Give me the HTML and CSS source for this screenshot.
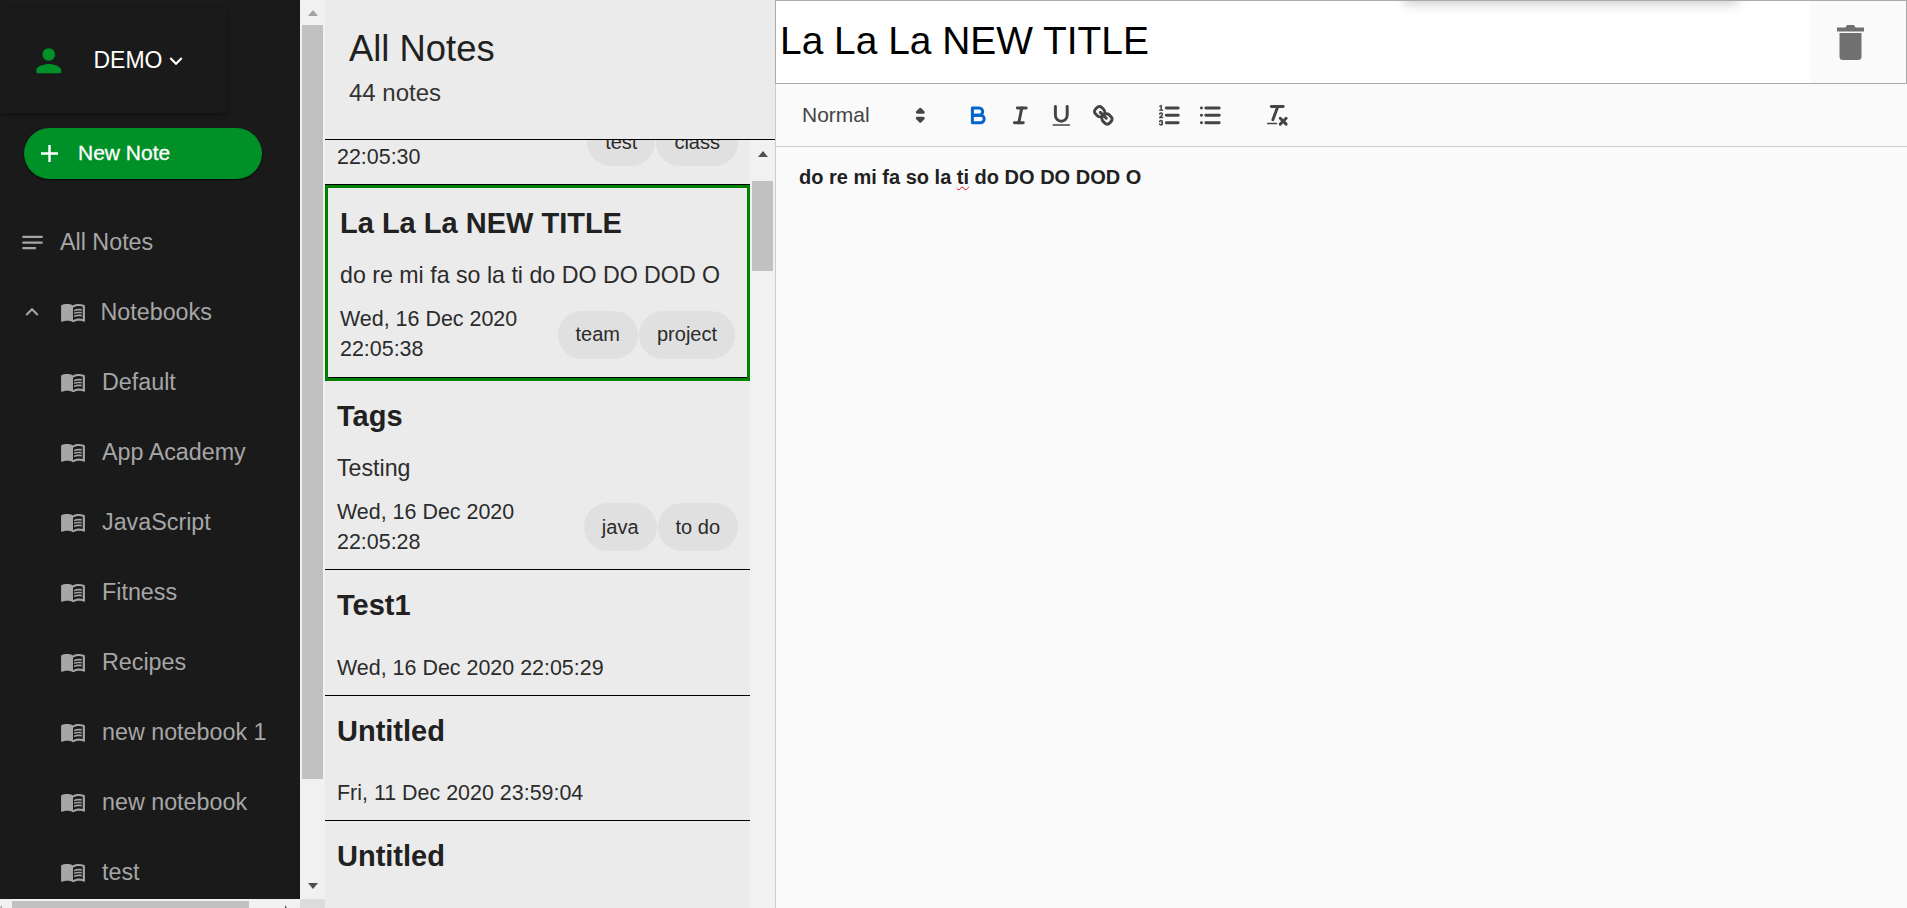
FILE: index.html
```html
<!DOCTYPE html>
<html lang="en">
<head>
  <meta charset="UTF-8">
  <title>Notes</title>
  <link rel="stylesheet" href="styles.css">
</head>
<body>
  <div class="app">

    <aside class="sidebar">
      <div class="sidebar-main">
        <div class="sidebar-content">
          <div class="profile">
            <svg class="person-icon" viewBox="0 0 24 24"><path d="M12 12c2.21 0 4-1.79 4-4s-1.79-4-4-4-4 1.79-4 4 1.79 4 4 4zm0 2c-2.67 0-8 1.34-8 4v1c0 .55.45 1 1 1h14c.55 0 1-.45 1-1v-1c0-2.66-5.33-4-8-4z"/></svg>
            <span class="profile-name">DEMO</span>
            <svg class="chevron" viewBox="0 0 24 24"><path d="M16.59 8.59L12 13.17 7.41 8.59 6 10l6 6 6-6z"/></svg>
          </div>

          <button class="new-note">
            <svg class="plus-icon" viewBox="0 0 24 24"><path d="M19 13h-6v6h-2v-6H5v-2h6V5h2v6h6v2z"/></svg>
            <span class="new-note-label">New Note</span>
          </button>

          <nav class="nav">
            <div class="nav-row nav-all">
              <svg class="notes-icon" viewBox="0 0 24 24"><path d="M3 18h12v-2H3v2zM3 6v2h18V6H3zm0 7h18v-2H3v2z"/></svg>
              All Notes
            </div>
            <div class="nav-row nav-group">
              <svg class="nav-icon" viewBox="0 0 24 24"><path d="M12 8l-6 6 1.41 1.41L12 10.83l4.59 4.58L18 14z"/></svg>
              <svg class="nav-icon" viewBox="0 0 24 24"><use href="#book"/></svg>
              Notebooks
            </div>
            <div class="nav-row nav-child"><svg class="nav-icon" viewBox="0 0 24 24"><use href="#book"/></svg>Default</div>
            <div class="nav-row nav-child"><svg class="nav-icon" viewBox="0 0 24 24"><use href="#book"/></svg>App Academy</div>
            <div class="nav-row nav-child"><svg class="nav-icon" viewBox="0 0 24 24"><use href="#book"/></svg>JavaScript</div>
            <div class="nav-row nav-child"><svg class="nav-icon" viewBox="0 0 24 24"><use href="#book"/></svg>Fitness</div>
            <div class="nav-row nav-child"><svg class="nav-icon" viewBox="0 0 24 24"><use href="#book"/></svg>Recipes</div>
            <div class="nav-row nav-child"><svg class="nav-icon" viewBox="0 0 24 24"><use href="#book"/></svg>new notebook 1</div>
            <div class="nav-row nav-child"><svg class="nav-icon" viewBox="0 0 24 24"><use href="#book"/></svg>new notebook</div>
            <div class="nav-row nav-child"><svg class="nav-icon" viewBox="0 0 24 24"><use href="#book"/></svg>test</div>
          </nav>
        </div>

        <div class="vbar vbar-sidebar">
          <span class="arrow-up arrow-faded"></span>
          <span class="vbar-thumb"></span>
          <span class="arrow-down"></span>
        </div>
      </div>

      <div class="sidebar-bottom">
        <div class="hbar">
          <span class="hbar-left"></span>
          <span class="hbar-thumb"></span>
          <span class="hbar-right"></span>
        </div>
        <div class="bar-corner"></div>
      </div>
    </aside>

    <section class="notes">
      <header class="notes-header">
        <h1>All Notes</h1>
        <p>44 notes</p>
      </header>

      <div class="notes-scroll">
        <div class="note-list">
          <!-- list is scrolled, only the foot of this note shows -->
          <article class="note note-scrolled">
            <div class="note-footer">
              <span class="note-date">Wed, 16 Dec 2020 22:05:30</span>
              <div class="chips"><span class="chip">test</span><span class="chip">class</span></div>
            </div>
          </article>

          <article class="note note-selected">
            <h2>La La La NEW TITLE</h2>
            <p class="note-body">do re mi fa so la ti do DO DO DOD O</p>
            <div class="note-footer">
              <span class="note-date">Wed, 16 Dec 2020 22:05:38</span>
              <div class="chips"><span class="chip">team</span><span class="chip">project</span></div>
            </div>
          </article>

          <article class="note">
            <h2>Tags</h2>
            <p class="note-body">Testing</p>
            <div class="note-footer">
              <span class="note-date">Wed, 16 Dec 2020 22:05:28</span>
              <div class="chips"><span class="chip">java</span><span class="chip">to do</span></div>
            </div>
          </article>

          <article class="note">
            <h2>Test1</h2>
            <div class="note-empty"></div>
            <div class="note-footer">
              <span class="note-date note-date-wide">Wed, 16 Dec 2020 22:05:29</span>
            </div>
          </article>

          <article class="note">
            <h2>Untitled</h2>
            <div class="note-empty"></div>
            <div class="note-footer">
              <span class="note-date note-date-wide">Fri, 11 Dec 2020 23:59:04</span>
            </div>
          </article>

          <article class="note">
            <h2>Untitled</h2>
          </article>
        </div>

        <div class="vbar vbar-list">
          <span class="arrow-up"></span>
          <span class="vbar-thumb"></span>
        </div>
      </div>
    </section>

    <main class="editor">
      <div class="editor-title">
        <div class="title-text">La La La NEW TITLE</div>
        <div class="delete-btn">
          <svg class="trash-icon" viewBox="0 0 27 35"><path d="M10 0h7l1.5 2.5H27V6.500H0V2.500h8.500z"/><path d="M2.500 8h22v23.500a3.500 3.500 0 0 1-3.500 3.500H6a3.500 3.500 0 0 1-3.500-3.500z"/></svg>
        </div>
        <div class="menu-shadow"></div>
      </div>

      <div class="toolbar">
        <div class="picker">
          <span>Normal</span>
          <svg class="ql" viewBox="0 0 18 18"><polygon class="ql-stroke ql-fill" points="7 11 9 13 11 11 7 11"/><polygon class="ql-stroke ql-fill" points="7 7 9 5 11 7 7 7"/></svg>
        </div>

        <div class="tool-group">
          <span class="tool tool-active"><svg class="ql" viewBox="0 0 18 18"><path class="ql-stroke" d="M5,4H9.5A2.5,2.5,0,0,1,12,6.5v0A2.5,2.5,0,0,1,9.5,9H5A0,0,0,0,1,5,9V4A0,0,0,0,1,5,4Z"/><path class="ql-stroke" d="M5,9h5.5A2.5,2.5,0,0,1,13,11.5v0A2.5,2.5,0,0,1,10.5,14H5a0,0,0,0,1,0,0V9A0,0,0,0,1,5,9Z"/></svg></span>
          <span class="tool"><svg class="ql" viewBox="0 0 18 18"><line class="ql-stroke" x1="7" x2="13" y1="4" y2="4"/><line class="ql-stroke" x1="5" x2="11" y1="14" y2="14"/><line class="ql-stroke" x1="8" x2="10" y1="14" y2="4"/></svg></span>
          <span class="tool"><svg class="ql" viewBox="0 0 18 18"><path class="ql-stroke" d="M5,3V9a4.012,4.012,0,0,0,4,4H9a4.012,4.012,0,0,0,4-4V3"/><rect class="ql-fill" height="1" rx="0.5" ry="0.5" width="12" x="3" y="15"/></svg></span>
          <span class="tool"><svg class="ql" viewBox="0 0 18 18"><line class="ql-stroke" x1="7" x2="11" y1="7" y2="11"/><path class="ql-stroke" d="M8.9,4.577a3.476,3.476,0,0,1,.36,4.679A3.476,3.476,0,0,1,4.577,8.9C3.185,7.5,2.035,6.4,4.217,4.217S7.5,3.185,8.9,4.577Z"/><path class="ql-stroke" d="M13.423,9.1a3.476,3.476,0,0,0-4.679-.36,3.476,3.476,0,0,0,.36,4.679c1.392,1.392,2.5,2.542,4.679.36S14.815,10.5,13.423,9.1Z"/></svg></span>
        </div>

        <div class="tool-group">
          <span class="tool"><svg class="ql" viewBox="0 0 18 18"><line class="ql-stroke" x1="7" x2="15" y1="4" y2="4"/><line class="ql-stroke" x1="7" x2="15" y1="9" y2="9"/><line class="ql-stroke" x1="7" x2="15" y1="14" y2="14"/><line class="ql-stroke ql-thin" x1="2.5" x2="4.5" y1="5.5" y2="5.5"/><path class="ql-fill" d="M3.5,6A0.5,0.5,0,0,1,3,5.5V3.085l-0.276.138A0.5,0.5,0,0,1,2.053,3c-0.124-.247-0.023-0.324.224-0.447l1-.5A0.5,0.5,0,0,1,4,2.5v3A0.5,0.5,0,0,1,3.5,6Z"/><path class="ql-stroke ql-thin" d="M4.5,10.5h-2c0-.234,1.85-1.076,1.85-2.234A0.959,0.959,0,0,0,2.5,8.156"/><path class="ql-stroke ql-thin" d="M2.5,14.846a0.959,0.959,0,0,0,1.85-.109A0.7,0.7,0,0,0,3.75,14a0.688,0.688,0,0,0,.6-0.736,0.959,0.959,0,0,0-1.85-.109"/></svg></span>
          <span class="tool"><svg class="ql" viewBox="0 0 18 18"><line class="ql-stroke" x1="6" x2="15" y1="4" y2="4"/><line class="ql-stroke" x1="6" x2="15" y1="9" y2="9"/><line class="ql-stroke" x1="6" x2="15" y1="14" y2="14"/><line class="ql-stroke" x1="3" x2="3" y1="4" y2="4"/><line class="ql-stroke" x1="3" x2="3" y1="9" y2="9"/><line class="ql-stroke" x1="3" x2="3" y1="14" y2="14"/></svg></span>
        </div>

        <div class="tool-group">
          <span class="tool"><svg class="ql" viewBox="0 0 18 18"><line class="ql-stroke" x1="5" x2="13" y1="3" y2="3"/><line class="ql-stroke" x1="6" x2="9.35" y1="12" y2="3"/><line class="ql-stroke" x1="11" x2="15" y1="11" y2="15"/><line class="ql-stroke" x1="15" x2="11" y1="11" y2="15"/><rect class="ql-fill" height="1" rx="0.5" ry="0.5" width="7" x="2" y="14"/></svg></span>
        </div>
      </div>

      <div class="editor-body">
        <p>do re mi fa so la <span class="misspelled">ti</span> do DO DO DOD O</p>
      </div>
    </main>

  </div>

  <svg class="svg-defs" aria-hidden="true">
    <symbol id="book" viewBox="0 0 24 24">
      <path d="M21 5c-1.11-.35-2.33-.5-3.5-.5-1.95 0-4.05.4-5.5 1.5-1.45-1.1-3.55-1.5-5.5-1.5S2.450 4.900 1 6v14.650c0 .25.25.5.5.5.1 0 .15-.05.25-.05C3.100 20.450 5.050 20 6.500 20c1.950 0 4.050.4 5.500 1.500 1.350-.85 3.800-1.500 5.500-1.500 1.650 0 3.350.3 4.750 1.050.1.05.15.05.25.05.25 0 .5-.25.5-.5V6c-.6-.45-1.250-.75-2-1zm0 13.500c-1.100-.35-2.300-.5-3.500-.5-1.700 0-4.150.65-5.500 1.500V8c1.350-.85 3.800-1.500 5.500-1.500 1.200 0 2.400.15 3.500.5v11.500z"/>
      <path d="M17.500 10.500c.88 0 1.730.09 2.500.26V9.240c-.79-.15-1.640-.24-2.500-.24-1.700 0-3.240.29-4.500.83v1.660c1.130-.64 2.700-.99 4.500-.99zM13 12.490v1.660c1.130-.64 2.700-.99 4.500-.99.88 0 1.730.09 2.500.26V11.900c-.79-.15-1.640-.24-2.500-.24-1.700 0-3.240.3-4.500.83zM17.500 14.330c-1.700 0-3.240.29-4.500.83v1.660c1.130-.64 2.700-.99 4.500-.99.88 0 1.730.09 2.500.26v-1.520c-.79-.16-1.640-.24-2.500-.24z"/>
    </symbol>
  </svg>
</body>
</html>
```

FILE: styles.css
```css
* {
  box-sizing: border-box;
}

body {
  margin: 0;
  font-family: "Liberation Sans", Arial, sans-serif;
  color: #212121;
  background: #fafafa;
}

.app {
  display: flex;
  height: 100vh;
  overflow: hidden;
}

.svg-defs {
  display: none;
}

/* sidebar */

.sidebar {
  display: flex;
  flex-direction: column;
  flex: 0 0 325px;
  height: 908px;
}

.sidebar-main {
  display: flex;
  height: 899px;
}

.sidebar-content {
  flex: 0 0 300px;
  overflow: hidden;
  background: #1a1a1a;
  padding-top: 8px;
}

.profile {
  display: flex;
  align-items: center;
  width: 227px;
  height: 105px;
  padding-left: 30px;
  color: #fff;
  font-size: 23px;
  border-radius: 0 0 6px 0;
  box-shadow: 0 2px 5px rgba(0, 0, 0, 0.35);
}

.person-icon {
  width: 37.500px;
  height: 37.500px;
  fill: #009028;
  margin-right: 26px;
}

.chevron {
  width: 26px;
  height: 26px;
  fill: #fff;
}

.new-note {
  display: flex;
  align-items: center;
  gap: 14px;
  width: 238px;
  height: 51px;
  margin: 15px 0 0 24px;
  padding: 0 0 0 11px;
  border: 0;
  border-radius: 26px;
  background: #009028;
  color: #fff;
  font-family: inherit;
  font-size: 21px;
  -webkit-text-stroke: 0.3px #fff;
  box-shadow: 0 1px 2px rgba(0, 0, 0, 0.8);
}

.new-note-label {
  margin-top: -2px;
}

.plus-icon {
  width: 29px;
  height: 29px;
  fill: #fff;
}

.nav {
  margin-top: 28px;
}

.nav-row {
  display: flex;
  align-items: center;
  height: 70px;
  color: #a6a6a6;
  font-size: 23.300px;
  white-space: nowrap;
}

.nav-icon,
.notes-icon {
  fill: #a6a6a6;
  flex: none;
}

.nav-icon {
  width: 26px;
  height: 26px;
}

.notes-icon {
  width: 27px;
  height: 27px;
}

.nav-all {
  padding-left: 19px;
  gap: 14px;
}

.nav-group {
  padding-left: 18.500px;
  gap: 15px;
}

.nav-child {
  padding-left: 60px;
  gap: 16px;
}

/* scrollbars */

.vbar {
  display: flex;
  flex-direction: column;
  align-items: center;
  flex: 0 0 25px;
  background: #f1f1f1;
}

.vbar-thumb {
  width: 21px;
  background: #c1c1c1;
}

.arrow-up,
.arrow-down {
  width: 0;
  height: 0;
  border-left: 5.500px solid transparent;
  border-right: 5.500px solid transparent;
}

.arrow-up {
  border-bottom: 6px solid #505050;
}

.arrow-faded {
  border-bottom-color: #a3a3a3;
}

.arrow-down {
  border-top: 6px solid #505050;
}

.vbar-sidebar {
  padding: 10px 0 10px;
}

.vbar-sidebar .vbar-thumb {
  height: 754px;
  margin-top: 9px;
}

.vbar-sidebar .arrow-down {
  margin-top: auto;
}

.vbar-list {
  padding-top: 11px;
}

.vbar-list .vbar-thumb {
  height: 90px;
  margin-top: 24px;
}

.sidebar-bottom {
  display: flex;
  height: 9px;
}

.hbar {
  display: flex;
  flex: 0 0 300px;
  align-items: flex-end;
  background: #f1f1f1;
}

.hbar-left {
  width: 0;
  height: 0;
  border-top: 3px solid transparent;
  border-right: 2px solid #a3a3a3;
  margin-right: 10px;
}

.hbar-thumb {
  width: 237px;
  height: 7px;
  background: #c1c1c1;
}

.hbar-right {
  width: 0;
  height: 0;
  border-top: 3px solid transparent;
  border-left: 2px solid #505050;
  margin-left: 36px;
}

.bar-corner {
  flex: 0 0 25px;
  background: #dcdcdc;
}

/* notes column */

.notes {
  display: flex;
  flex-direction: column;
  flex: 0 0 450px;
  background: #ebebeb;
}

.notes-header {
  flex: none;
  height: 140px;
  padding: 27px 0 0 24px;
  border-bottom: 1px solid #000;
}

.notes-header h1 {
  margin: 0;
  font-size: 36.400px;
  font-weight: normal;
  line-height: 44px;
}

.notes-header p {
  margin: 7px 0 0;
  font-size: 24px;
  line-height: 30px;
  color: #333;
}

.notes-scroll {
  display: flex;
  flex: 1;
  min-height: 0;
}

.note-list {
  flex: 0 0 425px;
  overflow: hidden;
}

.note {
  padding: 12px;
  border-bottom: 1px solid #000;
}

.note-scrolled {
  margin-top: -28px;
  padding-top: 0;
}

.note:last-child {
  border-bottom: 0;
}

.note h2 {
  margin: 0;
  font-size: 29px;
  font-weight: bold;
  line-height: 46.500px;
}

.note-body {
  margin: 12px 0;
  font-size: 23.200px;
  line-height: 34px;
  color: #2b2b2b;
}

.note-empty {
  height: 24px;
}

.note-footer {
  display: flex;
  align-items: center;
  justify-content: space-between;
}

.note-date {
  width: 190px;
  font-size: 21.450px;
  line-height: 30px;
  color: #2b2b2b;
}

.note-date-wide {
  width: auto;
}

.chips {
  display: flex;
  gap: 1px;
}

.chip {
  display: flex;
  align-items: center;
  height: 48px;
  padding: 0 18px;
  border-radius: 24px;
  background: #e0e0e0;
  font-size: 20px;
  color: #2b2b2b;
}

.note-selected {
  padding: 12px 12px 14.400px;
  border: 3px solid #008000;
  box-shadow: inset 0 -1px 0 #000;
}

.note-selected .note-body {
  margin-top: 11px;
}

.note-selected .chips {
  margin-top: 2px;
}

/* editor */

.editor {
  flex: 1;
  min-width: 0;
  display: flex;
  flex-direction: column;
  border-left: 1px solid #ccc;
}

.editor-title {
  position: relative;
  display: flex;
  flex: none;
  height: 84px;
  overflow: hidden;
  margin-left: -1px;
  background: #fff;
  border: 1px solid #aaa;
}

.title-text {
  flex: 1;
  padding-left: 4px;
  color: #000;
  font-size: 38.900px;
  line-height: 80px;
}

.delete-btn {
  display: flex;
  align-items: center;
  justify-content: center;
  flex: 0 0 96px;
  padding-right: 16px;
  background: #fafafa;
}

.trash-icon {
  width: 27px;
  height: 35px;
  fill: #707070;
}

.menu-shadow {
  position: absolute;
  top: -30px;
  left: 630px;
  width: 330px;
  height: 30px;
  box-shadow: 0 1px 12px 2px rgba(0, 0, 0, 0.2);
}

.toolbar {
  display: flex;
  align-items: center;
  flex: none;
  height: 63px;
  padding-left: 12px;
  border-bottom: 1px solid #ccc;
}

.picker {
  display: flex;
  align-items: center;
  justify-content: space-between;
  width: 148px;
  padding: 0 2px 0 14px;
  font-size: 21px;
  color: #444;
}

.tool-group {
  display: flex;
  margin-left: 25px;
}

.picker + .tool-group {
  margin-left: 22px;
}

.tool {
  display: flex;
  align-items: center;
  justify-content: center;
  width: 41.400px;
  height: 35px;
}

.ql {
  width: 26.600px;
  height: 26.600px;
  display: block;
}

.ql-stroke {
  fill: none;
  stroke: #444;
  stroke-width: 2;
  stroke-linecap: round;
  stroke-linejoin: round;
}

.ql-fill {
  fill: #444;
}

.ql-thin {
  stroke-width: 1;
}

.tool-active .ql-stroke {
  stroke: #06c;
}

.editor-body {
  flex: 1;
  padding: 18px 23px;
}

.editor-body p {
  margin: 0;
  font-size: 20px;
  font-weight: bold;
  line-height: 25px;
}

.misspelled {
  text-decoration: underline wavy #e01010 1px;
  text-underline-offset: 2px;
}
```
